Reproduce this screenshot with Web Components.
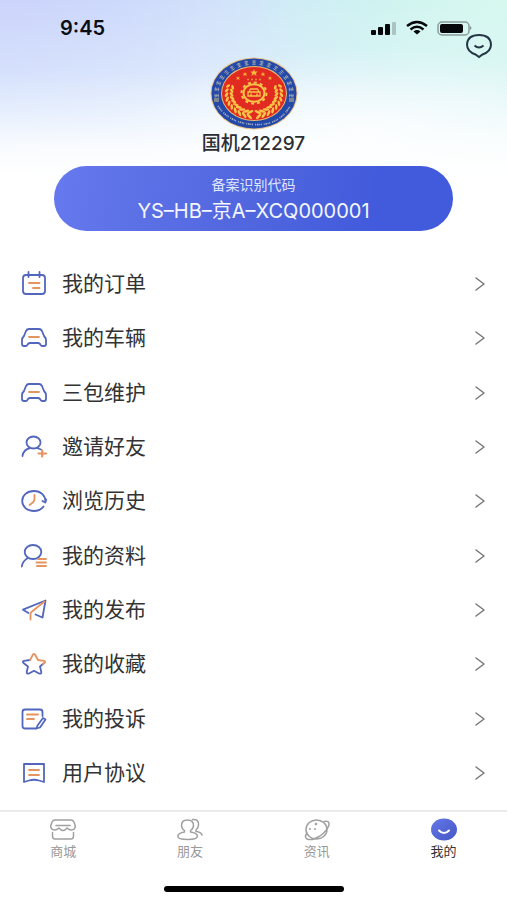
<!DOCTYPE html>
<html lang="zh-CN">
<head>
<meta charset="utf-8">
<meta name="viewport" content="width=device-width, initial-scale=1">
<title>我的</title>
<style>
  body {
    margin: 0;
    background: #fff;
    color: #2b2d33;
    font-family: Inter, "Noto Sans CJK SC", sans-serif;
  }
</style>
</head>
<body>
<profile-page></profile-page>

<script>
'use strict';

const attach = (element, html) => {
  const template = document.createElement('template');
  template.innerHTML = html;
  element.attachShadow({ mode: 'open' }).appendChild(template.content.cloneNode(true));
};

// b = blue stroke, o = orange stroke, g = grey stroke
const ICONS = {
  order: `
    <path class="b" d="M5 4H21Q24 4 24 7V20Q24 23 21 23H5Q2 23 2 20V7Q2 4 5 4ZM7.500 1V6M18.500 1V6"/>
    <path class="o" d="M8 12H18.500M12 17H18.500"/>`,
  car: `
    <path class="b" d="M8 4H18Q20 4 21 6L23 11Q25 13 25 15V19Q25 21 23 21H21Q20 21 19 19Q18 18 17 18H9Q8 18 7 19Q6 21 5 21H3Q1 21 1 19V15Q1 13 3 11L5 6Q6 4 8 4Z"/>
    <path class="o" d="M8 12H18"/>`,
  invite: `
    <ellipse class="b" cx="12.500" cy="8.500" rx="7" ry="6"/>
    <path class="b" d="M1.500 22Q2.500 15.500 9 14M16 14L20 15.500"/>
    <path class="o" style="stroke-width:2.200" d="M17.500 19.500H25M21.200 16.500V22.500"/>`,
  history: `
    <path class="b" d="M22.500 18.500Q19 23 13 23C6 23 1.200 18.500 1.200 13S6 3 13 3S24.500 8 24.500 13.500M21.500 13L24.300 14.500L25.200 11.500"/>
    <path class="o" d="M13.500 7V11Q13.500 14 8.500 17"/>`,
  profile: `
    <ellipse class="b" cx="12" cy="9" rx="8.300" ry="7"/>
    <path class="b" d="M.8 23.500Q1.500 18 7 15"/>
    <path class="o" d="M17 16H25M15.500 19.500H25M16 23H25"/>`,
  publish: `
    <path class="b" d="M7.500 16L2 12.700L24.500 3.500L21.500 20.500L14.500 17.500"/>
    <path class="o" d="M9.500 22.500V17Q9.500 15.500 11 14.500L23.500 4.500"/>`,
  star: `
    <path class="b" d="M9 9L3 9.800Q1 10.300 2.500 12L7 15.500L5.700 21Q5.700 23.300 8 22.500L13 19.800L18 22.500Q20.500 23.200 20.300 21L19 15.500L22.500 12.500"/>
    <path class="o" d="M9 9L12 3.500Q13 2.300 14 3.500L17 9L23 9.800Q25 10.300 23.500 12L22 13"/>`,
  complaint: `
    <path class="b" d="M15 22.500H4Q1.500 22.500 1.500 20V6Q1.500 3.500 4 3.500H19Q21.500 3.500 21.500 6V10"/>
    <path class="o" d="M6 8.500H17M6 13H13"/>
    <path class="b" d="M22 12L24.500 13.500L19 21.500L15.500 22.500L16.500 19.500Z"/>`,
  agreement: `
    <path class="b" d="M3 4H23V22L18 20.500Q13 19 8 20.500L3 22Z"/>
    <path class="o" d="M8 10H18M8 15H18"/>`,
  chevron: `<path class="g" d="M9 7L17 13L9 19"/>`,
  shop: `
    <path class="g" d="M5 3H21Q23 3 24 5L25.300 9Q25.300 12.500 21.500 13Q19 13 17 11Q15 13.500 13 13.500Q11 13.500 9 11Q7 13 4.500 13Q.7 12.500 .7 9L2 5Q3 3 5 3ZM6 8.500H20M2.500 15.500V19Q2.500 22 5 22H21Q23.500 22 23.500 19V15.500"/>`,
  friends: `
    <path class="g" d="M10.500 3Q16.500 3 16.500 8.500Q16.500 11.500 13.500 13.500V15Q20 16 20.500 19Q20.500 22.500 10.500 22.500T.8 19Q1.500 16 7.500 15V13.500Q4.500 11.500 4.500 8.500Q4.500 3 10.500 3ZM15.500 2.500Q22 2 21.500 8Q21.500 11 19 13V14.500Q24 15 25 18"/>`,
  planet: `
    <ellipse class="g" cx="12.500" cy="12.500" rx="10.500" ry="9.500"/>
    <path class="g" d="M20 4.500Q25.500 3 25 8Q23 14 16 19Q8 24 3 22Q0 20 3 16"/>
    <circle cx="12" cy="7" r="1.300"/><circle cx="6" cy="12" r="1"/><circle cx="11" cy="12" r="1"/>`,
  me: `
    <defs><linearGradient id="face" x2="1" y2="1"><stop stop-color="#6478e6"/><stop offset="1" stop-color="#4556c6"/></linearGradient></defs>
    <ellipse cx="13" cy="12.500" rx="13" ry="11" style="fill:url(#face)"/>
    <path d="M8 13.500Q13 18.500 18 13.500" style="fill:none;stroke:#fff;stroke-width:2;stroke-linecap:round"/>`,
  chat: `
    <path d="M9.500 21.500Q1 18.500 1 11.500Q1.500 2 13 2Q24.500 2 25 11.500Q25 18.500 16.500 21.500L13 24Z" style="fill:none;stroke:#253746;stroke-width:2"/>
    <path d="M8.500 12.500Q13 16.500 17.500 12.500" style="fill:none;stroke:#253746;stroke-width:2"/>`
};

customElements.define('ui-icon', class extends HTMLElement {
  constructor() {
    super();
    attach(this, `
      <style>
        :host { display: block; flex: none; width: 26px; height: 26px; }
        svg { display: block; width: 100%; height: 100%; fill: #a0a0a0; }
        .b, .o, .g { fill: none; stroke-width: 1.8; stroke-linejoin: round; stroke-linecap: round; }
        .b { stroke: #5266bd; }
        .o { stroke: #e5935f; }
        .g { stroke: var(--icon-grey, #a0a0a0); stroke-width: 1.5; }
      </style>
      <svg viewBox="0 0 26 26" aria-hidden="true"></svg>`);
  }

  connectedCallback() {
    this.shadowRoot.querySelector('svg').innerHTML = ICONS[this.getAttribute('name')];
  }
});

customElements.define('status-bar', class extends HTMLElement {
  constructor() {
    super();
    attach(this, `
      <style>
        :host {
          display: flex;
          align-items: center;
          justify-content: space-between;
          height: 56px;
          padding: 0 34px 0 60px;
          color: #0b0d12;
          font-size: 20px;
          font-weight: 600;
        }
        svg { display: block; }
      </style>
      <slot></slot>
      <svg width="103" height="16" viewBox="0 0 103 16" aria-hidden="true">
        <g fill="#05070a">
          <rect x="1" y="10" width="5" height="5" rx="1"/>
          <rect x="8" y="7" width="5" height="8" rx="1"/>
          <rect x="15" y="4" width="5" height="11" rx="1"/>
          <rect x="22" y="2" width="4" height="13" rx="1" opacity=".2"/>
          <path d="M43.500 11.500Q47 8.700 50.500 11.500L47 14.500Z"/>
          <rect x="70" y="4" width="23" height="9" rx="2"/>
          <path d="M100 6Q103 8 100 10Z" opacity=".4"/>
        </g>
        <g fill="none" stroke="#05070a" stroke-width="2.400">
          <path d="M37 6Q47-2 57 6M40.500 9.500Q47 4 53.500 9.500"/>
        </g>
        <rect x="68" y="2" width="31" height="13" rx="4" fill="none" stroke="#8a9a9c" stroke-width="1.500"/>
      </svg>`);
  }
});

customElements.define('user-emblem', class extends HTMLElement {
  constructor() {
    super();
    attach(this, `
      <style>
        :host { display: block; width: 88px; height: 73px; }
        svg { display: block; width: 100%; height: 100%; }
      </style>
      <svg viewBox="0 0 88 73" role="img" aria-label="徽章">
        <ellipse cx="44" cy="36.500" rx="43.500" ry="36" fill="#e8c489"/>
        <ellipse cx="44" cy="36.500" rx="42.500" ry="35" fill="#2448a8"/>
        <ellipse cx="44" cy="36.500" rx="33" ry="27.500" fill="#e9bc74"/>
        <ellipse cx="44" cy="36.500" rx="32" ry="26.600" fill="#e22b20"/>
        <g id="ring" fill="none" stroke="#a9aeb0"></g>
        <g id="wreath" fill="#f8c548"></g>
        <g fill="none" stroke="#f8c548">
          <ellipse cx="44" cy="36" rx="10.500" ry="8.700" stroke-width="2"/>
          <ellipse cx="44" cy="36" rx="12.500" ry="10.600" stroke-width="2" stroke-dasharray="3 3"/>
          <path d="M39 35L40.500 32H47.500L49 35M38 35H50V39H38ZM41 39V36.500M47 39V36.500" stroke-width="1.300"/>
        </g>
        <g id="stars" fill="#f8b83e"></g>
        <path d="M37 22.500H51" stroke="#e98a3c" stroke-width="1.500" stroke-dasharray="2 2"/>
        <path d="M4 42H9M79 42H84M4 44H9M79 44H84" stroke="#d9c17c"/>
      </svg>`);
    this.drawRing();
    this.drawWreath();
    this.drawStars();
  }

  // characters of the rim are too small to read, so each is a few strokes
  drawRing() {
    let marks = '';
    for (let i = 0; i < 17; i++) {
      const angle = 176 + i * 11.75;
      const x = 44 + 37.5 * Math.cos(angle * Math.PI / 180);
      const y = 36.5 + 31 * Math.sin(angle * Math.PI / 180);
      marks += `<path transform="translate(${x} ${y}) rotate(${angle + 90})" stroke-width=".7" d="M-2-1.500H2M-1.500 0H1.500M-2 1.700H2M0-2.500V2.500"/>`;
    }
    marks += '<path d="M8 49Q19 66 44 67.500T80 49" stroke="#a5b3c5" stroke-width="1.600" stroke-dasharray="1 .8 1.500 .7 1 .6 1 2"/>';
    this.shadowRoot.querySelector('#ring').innerHTML = marks;
  }

  // two rows of leaves on each side, rising from the bottom middle
  drawWreath() {
    let leaves = '';
    for (let i = 0; i < 10; i++) {
      const degrees = 100 + i * 11;
      const angle = degrees * Math.PI / 180;
      const size = 3.6 - i * .14;
      for (const side of [-1, 1]) {
        for (const [radius, tilt] of [[27.5, 35], [22.5, -35]]) {
          const x = 44 - side * radius * Math.cos(angle);
          const y = 36.5 + radius * .84 * Math.sin(angle);
          const turn = -side * (degrees + 90 + tilt);
          leaves += `<ellipse cx="${x}" cy="${y}" rx="${size}" ry="1.300" transform="rotate(${turn} ${x} ${y})"/>`;
        }
      }
    }
    this.shadowRoot.querySelector('#wreath').innerHTML = leaves;
  }

  drawStars() {
    this.shadowRoot.querySelector('#stars').innerHTML = [
      [28, 21, .5], [35, 17, .55], [44, 15.5, .9], [53, 17, .55], [60, 21, .5]
    ].map(([x, y, scale]) =>
      `<path transform="translate(${x} ${y}) scale(${scale})" d="M0-4L1-1H4L2 1L3 4L0 2L-3 4L-2 1L-4-1H-1Z"/>`
    ).join('');
  }
});

customElements.define('record-code', class extends HTMLElement {
  constructor() {
    super();
    attach(this, `
      <style>
        :host {
          display: flex;
          flex-direction: column;
          align-items: center;
          justify-content: center;
          gap: 4px;
          height: 65px;
          border-radius: 36px;
          background: linear-gradient(100deg, #6679ee, #5368df 45%, #425bdc 80%);
          color: #f4f6ff;
          font-size: 20px;
          line-height: 24px;
        }
        small { color: #dfe4ff; font-size: 14px; line-height: 20px; }
      </style>
      <small><slot name="label"></slot></small>
      <slot></slot>`);
  }
});

customElements.define('menu-item', class extends HTMLElement {
  constructor() {
    super();
    attach(this, `
      <style>
        :host { display: grid; min-height: 44px; }
        a {
          display: flex;
          align-items: center;
          padding: 0 14px 0 21px;
          color: #333;
          font-size: 21px;
          line-height: 30px;
          text-decoration: none;
        }
        span { flex: 1; padding-left: 15px; }
        .arrow { --icon-grey: #777; }
      </style>
      <a href="#">
        <ui-icon name="${this.getAttribute('icon')}"></ui-icon>
        <span><slot></slot></span>
        <ui-icon class="arrow" name="chevron"></ui-icon>
      </a>`);
  }
});

customElements.define('tab-item', class extends HTMLElement {
  constructor() {
    super();
    attach(this, `
      <style>
        :host { display: grid; }
        button {
          display: flex;
          flex-direction: column;
          align-items: center;
          padding: 0;
          border: 0;
          background: none;
          color: #999;
          font: inherit;
          font-size: 13px;
          line-height: 16px;
        }
        :host([active]) button { color: #333; }
      </style>
      <button type="button">
        <ui-icon name="${this.getAttribute('icon')}"></ui-icon>
        <slot></slot>
      </button>`);
  }
});

customElements.define('tab-bar', class extends HTMLElement {
  constructor() {
    super();
    attach(this, `
      <style>
        :host { display: block; height: 90px; box-sizing: border-box; border-top: 2px solid #ebebeb; }
        nav { display: grid; grid-template-columns: repeat(4, 1fr); padding-top: 5px; }
        div { width: 180px; height: 6px; margin: 27px auto 0; border-radius: 3px; background: #000; }
      </style>
      <nav><slot></slot></nav>
      <div></div>`);
  }
});

customElements.define('profile-page', class extends HTMLElement {
  constructor() {
    super();
    attach(this, `
      <style>
        :host { display: flex; flex-direction: column; min-height: 100vh; }
        header {
          position: relative;
          padding-bottom: 26px;
          background:
            linear-gradient(#fff0, #fff3 70px, #fff8 110px, #fffd 145px, #fff 175px),
            radial-gradient(ellipse at 72% 50%, #f2f9fe, #f2f9fe00 45%),
            radial-gradient(ellipse at 100% 0, #d6f8ef, #d6f8ef00 35%),
            radial-gradient(ellipse at 0 0, #ccd4fb, #ccd4fb00 40%),
            linear-gradient(90deg, #c8ddfc, #d5e6fb 40%, #c9eef3 75%, #d0f2f3);
        }
        .chat { position: absolute; top: 33px; right: 15px; }
        user-emblem { margin: 1px auto 0; }
        h1 {
          margin: 1px 0 10px;
          font-size: 19px;
          font-weight: 500;
          line-height: 25px;
          text-align: center;
        }
        record-code { margin: 0 54px; }
        main { display: grid; flex: 1; grid-auto-rows: 1fr; padding-bottom: 10px; }
      </style>
      <header>
        <status-bar>9:45</status-bar>
        <ui-icon class="chat" name="chat"></ui-icon>
        <user-emblem></user-emblem>
        <h1>国机212297</h1>
        <record-code><span slot="label">备案识别代码</span>YS–HB–京A–XCQ000001</record-code>
      </header>
      <main>
        <menu-item icon="order">我的订单</menu-item>
        <menu-item icon="car">我的车辆</menu-item>
        <menu-item icon="car">三包维护</menu-item>
        <menu-item icon="invite">邀请好友</menu-item>
        <menu-item icon="history">浏览历史</menu-item>
        <menu-item icon="profile">我的资料</menu-item>
        <menu-item icon="publish">我的发布</menu-item>
        <menu-item icon="star">我的收藏</menu-item>
        <menu-item icon="complaint">我的投诉</menu-item>
        <menu-item icon="agreement">用户协议</menu-item>
      </main>
      <tab-bar>
        <tab-item icon="shop">商城</tab-item>
        <tab-item icon="friends">朋友</tab-item>
        <tab-item icon="planet">资讯</tab-item>
        <tab-item icon="me" active>我的</tab-item>
      </tab-bar>`);
  }
});
</script>
</body>
</html>
